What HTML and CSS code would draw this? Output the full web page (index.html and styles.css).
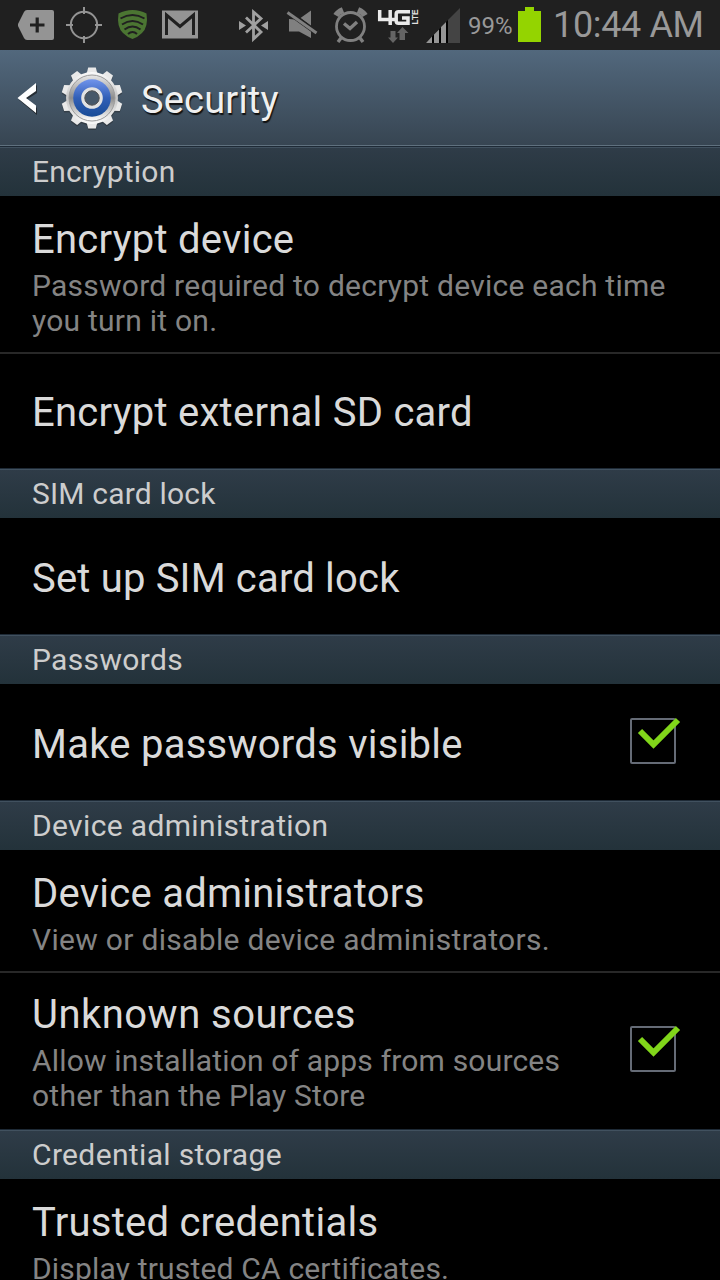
FILE: index.html
```html
<!DOCTYPE html>
<html lang="en">
<head>
<meta charset="utf-8">
<title>Security</title>
<link rel="stylesheet" href="styles.css">
</head>
<body>
<div class="screen">
  <header class="status">
    <svg class="status-icons" width="460" height="50" viewBox="0 0 460 50" aria-hidden="true">
      <path fill="#949494" d="M27 10H52Q54 10 54 12V38Q54 40 52 40H27Q25 40 24 38L18 26V24L24 12Q25 10 27 10Z"/>
      <path stroke="#202020" stroke-width="3.2" d="M30 25H44.500M37.200 17.500V32.500"/>
      <g fill="none" stroke="#949494" stroke-width="2">
        <circle cx="84" cy="25" r="13.200"/>
        <path d="M84 7V14M84 36V43M66 25H73M95 25H102"/>
      </g>
      <path fill="#4b7532" d="M132.500 10Q140 10 146.500 13.500Q148.500 27 142 33Q138 37 132.500 39Q127 37 123 33Q116.500 27 118.500 13.500Q125 10 132.500 10Z"/>
      <g fill="none" stroke="#202020" stroke-width="2">
        <path d="M120.500 18.500Q132.500 11.500 144.500 18.500M122 24.500Q132.500 17.500 143 24.500M124.500 29.500Q132.500 23.500 140.500 29.500M128 34Q132.500 30 137 34"/>
      </g>
      <path fill="#949494" d="M162 10.500H198V38.500H162Z"/>
      <path fill="none" stroke="#202020" stroke-width="3" d="M166.500 35V15L180 26.500L193.500 15V35"/>
      <path fill="none" stroke="#a0a0a0" stroke-width="2.800" d="M246 17.500L261 32L253.500 39V12L261 18.500L246 32.500"/>
      <path fill="#a0a0a0" d="M239 21L246 25.500L239 30ZM268 21L261 25.500L268 30Z"/>
      <path fill="#808080" d="M289 19L295 19.500L311 31V38L299 31.500H289ZM300.500 18L311 10.500V26Z"/>
      <path stroke="#202020" stroke-width="5" d="M288 12L317 33"/>
      <path stroke="#808080" stroke-width="3" d="M287.500 12.500L316.500 33"/>
      <g fill="none" stroke="#808080">
        <circle cx="350.500" cy="26.500" r="14" stroke-width="2.800"/>
        <path stroke-width="3.400" d="M344 23.500L350 28.500L357 22M341 38L338 42M360 38L363 42"/>
        <path stroke-width="6" d="M336 15.500Q338 12 343 10M365 15.500Q363 12 358 10"/>
      </g>
      <g fill="none" stroke="#ebebeb" stroke-width="3.500">
        <path d="M379.700 10V19.500H395M390.200 10V25M410 11.700H398.500Q396.200 11.700 396.200 14V21Q396.200 23.200 398.500 23.200H408V18H402"/>
      </g>
      <text class="lte" x="-24.500" y="417.500" transform="rotate(-90)" textLength="15" lengthAdjust="spacingAndGlyphs">LTE</text>
      <path fill="#646464" d="M390.500 31H395.500V37.500H398L393 43L388 37.500H390.500ZM399.500 40V33H397L402.500 27L408.500 33H405V40Z"/>
      <path fill="#444" d="M448 20L461 7V43H448Z"/>
      <path fill="#000" d="M426 43L448 20V43Z"/>
      <path fill="#959595" d="M426 43L432 36.500V43ZM434 34.500L439 29.500V43H434ZM441 27L446 22V43H441Z"/>
    </svg>
    <span class="percent">99%</span>
    <span class="battery"></span>
    <span class="clock">10:44 AM</span>
  </header>
  <div class="bar">
    <svg class="back" width="22" height="34" viewBox="0 0 22 34" aria-hidden="true">
      <path fill="#111" opacity=".6" d="M19 3V11L8 18L19 26V33L1 18Z"/>
      <path fill="#fff" d="M18 1V9L8 16L18 23.500V31L-0.500 16Z"/>
    </svg>
    <svg class="gear" width="64" height="66" viewBox="-32 -33 64 66" aria-hidden="true">
      <defs>
        <linearGradient id="metal" x1="0" y1="0" x2="0" y2="1"><stop offset="0" stop-color="#fafafa"/><stop offset=".5" stop-color="#c5c5c5"/><stop offset="1" stop-color="#fafafa"/></linearGradient>
        <linearGradient id="rim" x1="0" y1="0" x2="0" y2="1"><stop offset="0" stop-color="#e8e8e8"/><stop offset=".5" stop-color="#8d8d8d"/><stop offset="1" stop-color="#fff"/></linearGradient>
        <linearGradient id="blue" x1="0" y1="0" x2="0" y2="1"><stop offset="0" stop-color="#7194ec"/><stop offset=".5" stop-color="#315fb7"/><stop offset="1" stop-color="#184b96"/></linearGradient>
        <path id="tooth" d="M-5.500 -24L-3.800 -30.500H3.800L5.500 -24Z"/>
        <g id="teeth"><use href="#tooth"/><use href="#tooth" transform="rotate(36)"/><use href="#tooth" transform="rotate(72)"/><use href="#tooth" transform="rotate(108)"/><use href="#tooth" transform="rotate(144)"/><use href="#tooth" transform="rotate(180)"/><use href="#tooth" transform="rotate(216)"/><use href="#tooth" transform="rotate(252)"/><use href="#tooth" transform="rotate(288)"/><use href="#tooth" transform="rotate(324)"/></g>
      </defs>
      <g fill="#222" opacity=".4" transform="translate(0 1.500)"><use href="#teeth"/><circle r="26"/></g>
      <use href="#teeth" fill="#e9e9e9"/>
      <circle r="26" fill="url(#metal)"/>
      <circle r="23" fill="url(#rim)" stroke="#9b9b9b"/>
      <circle r="18.800" fill="url(#blue)"/>
      <circle r="9" fill="#68737f" stroke="#e2e2e2" stroke-width="3.600"/>
      <circle r="7.200" fill="#475869" stroke="#555"/>
    </svg>
    <h1 class="heading">Security</h1>
  </div>
  <main class="list">
    <h2 class="section snug">Encryption</h2>
    <div class="row row-three divided">
      <div class="title">Encrypt device</div>
      <div class="summary">Password required to decrypt device each time<br>you turn it on.</div>
    </div>
    <div class="row row-one"><div class="title">Encrypt external SD card</div></div>
    <h2 class="section snug">SIM card lock</h2>
    <div class="row row-one tall"><div class="title snug">Set up SIM card lock</div></div>
    <h2 class="section">Passwords</h2>
    <div class="row row-one tall checkable">
      <div class="title">Make passwords visible</div>
      <svg class="check" width="52" height="48" viewBox="0 0 52 48" aria-hidden="true"><rect x="1" y="3" width="44" height="44" rx="1" fill="none" stroke="#656b76" stroke-width="2"/><path d="M10 15L23.500 28.500L48 4" fill="none" stroke="#81d61a" stroke-width="6"/></svg>
    </div>
    <h2 class="section">Device administration</h2>
    <div class="row row-two divided">
      <div class="title">Device administrators</div>
      <div class="summary loose">View or disable device administrators.</div>
    </div>
    <div class="row row-three checkable">
      <div>
        <div class="title loose">Unknown sources</div>
        <div class="summary"><span class="snug">Allow installation of apps from sources</span><br>other than the Play Store</div>
      </div>
      <svg class="check" width="52" height="48" viewBox="0 0 52 48" aria-hidden="true"><rect x="1" y="3" width="44" height="44" rx="1" fill="none" stroke="#656b76" stroke-width="2"/><path d="M10 15L23.500 28.500L48 4" fill="none" stroke="#81d61a" stroke-width="6"/></svg>
    </div>
    <h2 class="section">Credential storage</h2>
    <div class="row row-two">
      <div class="title">Trusted credentials</div>
      <div class="summary snug">Display trusted CA certificates.</div>
    </div>
  </main>
</div>
</body>
</html>
```
FILE: styles.css
```css
* { box-sizing: border-box; }
body { margin: 0; background: #000; font-family: Roboto, sans-serif; overflow: hidden; }
h1, h2 { margin: 0; font-weight: 400; }
.screen { width: 720px; height: 1280px; overflow: hidden; background: #000; }
.status { height: 50px; display: flex; align-items: center; background: #202020; color: #999; white-space: nowrap; }
.status-icons { flex: none; }
.lte { font: bold 9px "Liberation Sans", sans-serif; fill: #e0e0e0; }
.percent { width: 58px; padding-left: 8px; font-size: 24px; line-height: 50px; padding-top: 2px; }
.battery { width: 23px; height: 35px; margin-top: -1px; background: #94d400; clip-path: polygon(0 4px, 7px 4px, 7px 0, 16px 0, 16px 4px, 100% 4px, 100% 100%, 0 100%); }
.clock { margin-left: 12px; font-size: 36px; line-height: 50px; letter-spacing: -.35px; }
.bar { height: 96px; display: flex; align-items: center; padding-left: 18px; background: linear-gradient(#52687d, #374552); border-bottom: 1px solid #60717f; }
.back { margin-top: 2px; overflow: visible; }
.gear { margin-left: 20px; }
.heading { margin-left: 17px; font-size: 38px; line-height: 48px; letter-spacing: .2px; color: #f0f0f0; text-shadow: 1px 2px 1px #111; padding-top: 4px; }
.section { height: 50px; padding-left: 32px; font-size: 30px; line-height: 49px; letter-spacing: .35px; color: #cdcdcd; background: linear-gradient(#2f3c48, #23323a); border-top: 1px solid #1e2a36; box-shadow: inset 0 1px #41515f; }
.row { padding: 20px 0 0 32px; }
.row-three { height: 156px; }
.row-two { height: 121px; }
.row-one { height: 114px; padding-top: 35px; }
.row-one.tall { height: 116px; padding-top: 37px; }
.divided { border-bottom: 2px solid #282828; }
.row-three.divided { height: 158px; }
.row-two.divided { height: 123px; }
.title { font-size: 40px; line-height: 48px; letter-spacing: .25px; color: #dadada; white-space: nowrap; }
.summary { margin-top: 4px; font-size: 30px; line-height: 35px; letter-spacing: .24px; color: #848484; white-space: nowrap; }
.section.snug, .title.snug, .summary.snug, .snug { letter-spacing: .18px; }
.title.loose { letter-spacing: .48px; }
.summary.loose { letter-spacing: .31px; }
.checkable { display: flex; justify-content: space-between; padding-right: 38px; }
.row-three.checkable { padding-top: 18px; }
.check { flex: none; }
.row-three .check { margin-top: 33px; }
.row-one .check { margin-top: -5px; }
```
